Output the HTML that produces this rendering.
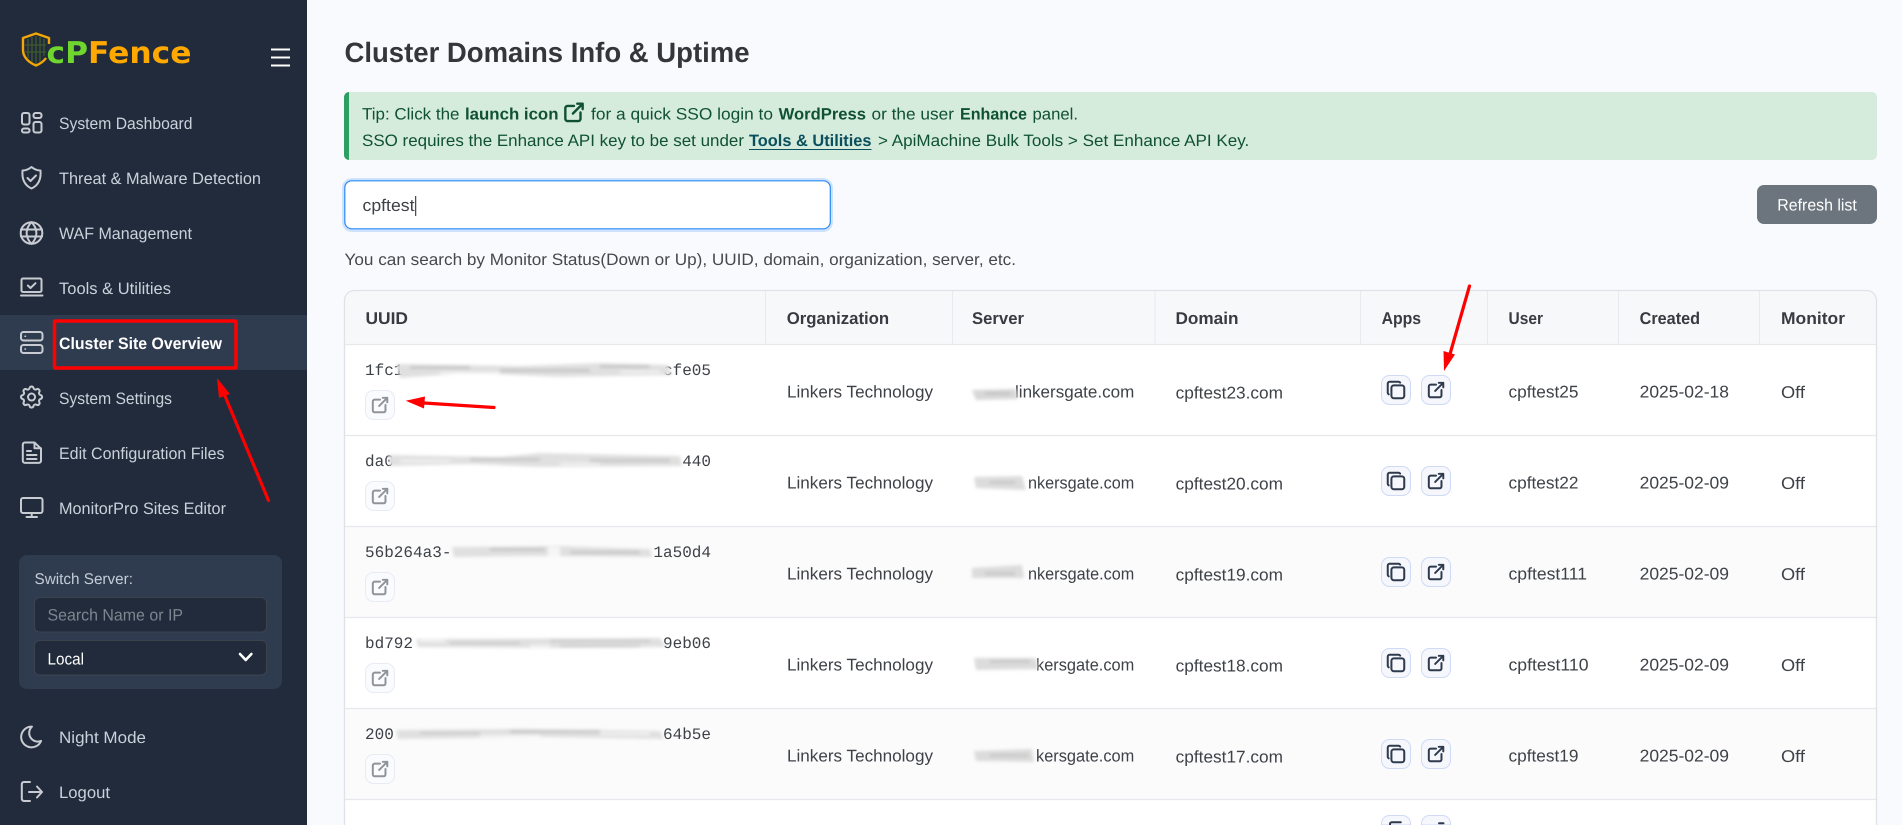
<!DOCTYPE html>
<html lang="en">
<head>
<meta charset="utf-8">
<title>Cluster Domains Info &amp; Uptime</title>
<style>
html,body{margin:0;padding:0;width:1902px;height:825px;overflow:hidden;background:#f9fafd}
svg{display:block;text-rendering:geometricPrecision}
text{font-family:"Liberation Sans",sans-serif;font-size:16px}
.nav{fill:#c9d1db;font-size:16.5px}
.h{font-weight:700;fill:#383b41;font-size:17px}
.t{fill:#3e4247;font-size:17px}
.m{font-family:"Liberation Mono",monospace;fill:#3e4247;font-size:16px}
.a{fill:#0f5132;font-size:16.5px}
.ab{fill:#0f5132;font-size:16.5px;font-weight:700}
.i{fill:none;stroke:#c8ccd2;stroke-width:2;stroke-linecap:round;stroke-linejoin:round}
.sep{stroke:#e8eaee;stroke-width:1}
</style>
</head>
<body>
<svg xmlns="http://www.w3.org/2000/svg" width="1902" height="825" viewBox="0 0 1902 825">
<defs>
  <filter id="bl" x="-10%" y="-80%" width="120%" height="260%"><feGaussianBlur stdDeviation="1.7"/></filter>
  <symbol id="ext" viewBox="0 0 24 24"><path fill="none" stroke="currentColor" stroke-width="2.2" stroke-linecap="round" stroke-linejoin="round" d="M12 6h-6a2 2 0 0 0 -2 2v10a2 2 0 0 0 2 2h10a2 2 0 0 0 2 -2v-6M11 13l9 -9M15 4h5v5"/></symbol>
  <symbol id="copy" viewBox="0 0 24 24"><path fill="none" stroke="currentColor" stroke-width="2.2" stroke-linecap="round" stroke-linejoin="round" d="M7 9.667a2.667 2.667 0 0 1 2.667 -2.667h8.666a2.667 2.667 0 0 1 2.667 2.667v8.666a2.667 2.667 0 0 1 -2.667 2.667h-8.666a2.667 2.667 0 0 1 -2.667 -2.667zM4.012 16.737a2.005 2.005 0 0 1 -1.012 -1.737v-10c0 -1.1 .9 -2 2 -2h10c.75 0 1.158 .385 1.5 1"/></symbol>
  <g id="btns">
    <rect x="1381.5" y="375.5" width="29" height="29" rx="8" fill="#f5f7fd" stroke="#cfdaf7"/>
    <rect x="1421.5" y="375.5" width="29" height="29" rx="8" fill="#f5f7fd" stroke="#cfdaf7"/>
    <use href="#copy" x="1385" y="379" width="22" height="22" color="#2f3a4d"/>
    <use href="#ext" x="1425.2" y="379.2" width="21.7" height="21.7" color="#2f3a4d"/>
  </g>
  <g id="lb">
    <rect x="365.5" y="390.5" width="29" height="29" rx="8" fill="#fafbfe" stroke="#e8ebf4"/>
    <use href="#ext" x="369.2" y="394.2" width="21.7" height="21.7" color="#8f949b"/>
  </g>
</defs>

<!-- main background -->
<rect width="1902" height="825" fill="#f9fafd"/>

<!-- sidebar -->
<rect width="307" height="825" fill="#212b3b"/>
<rect y="315" width="307" height="55" fill="#2f3c4f"/>

<!-- logo -->
<g stroke="#3f5a2e" stroke-width="1.3">
  <path d="M28 39V58M32 37V62M36 36V64M40 37V62M44 39V56M25 45H46M25 52H46"/>
</g>
<path d="M49 44V38L36 33.500 23 38V50C23 58 30 63 36 65.500 41 63.500 44 61 46 58" fill="none" stroke="#f2a608" stroke-width="2.4" stroke-linejoin="round"/>
<text x="46.500" y="63" style="font-family:'DejaVu Sans',sans-serif;font-size:30px;font-weight:700" textLength="145" lengthAdjust="spacingAndGlyphs"><tspan fill="#6ed62c">cP</tspan><tspan fill="#ffa900">Fence</tspan></text>

<!-- hamburger -->
<path d="M271 49.500H290M271 57.500H290M271 65.500H290" stroke="#fff" stroke-width="2"/>

<!-- nav icons -->
<g class="i">
  <rect x="22" y="113" width="7.500" height="11.500" rx="2"/><rect x="33.500" y="113" width="8" height="5" rx="2"/><rect x="22" y="128.500" width="7.500" height="4" rx="1.800"/><rect x="33.500" y="122" width="8" height="10.500" rx="2"/>
  <path d="M31.500 167c3 2.500 6 3.500 9 3.500 .8 9-2.500 15-9 18-6.500-3-9.800-9-9-18 3 0 6-1 9-3.500z M27.500 178l3 3 5.500-5.500"/>
  <circle cx="31.500" cy="233" r="10.800"/><path d="M21 229.500H42M21 236.500H42M31.500 222.200c-6.500 6.500-6.500 15 0 21.600M31.500 222.200c6.500 6.500 6.500 15 0 21.600"/>
  <rect x="21.500" y="278.500" width="20" height="13.500" rx="1.500"/><path d="M21 295.500H42.500M27.800 285.500l2.700 2.500 5-4.800"/>
  <rect x="21" y="332" width="21.500" height="8.500" rx="2.500"/><rect x="21" y="345" width="21.500" height="8" rx="2.500"/><path d="M25 336.300h.5M25 349h.5" stroke-width="1.500"/>
  <g transform="translate(17.500 383) scale(1.170)" stroke-width="1.700"><path d="M10.325 4.317c.426 -1.756 2.924 -1.756 3.350 0a1.724 1.724 0 0 0 2.573 1.066c1.543 -.94 3.310 .826 2.370 2.370a1.724 1.724 0 0 0 1.065 2.572c1.756 .426 1.756 2.924 0 3.350a1.724 1.724 0 0 0 -1.066 2.573c.94 1.543 -.826 3.310 -2.370 2.370a1.724 1.724 0 0 0 -2.572 1.065c-.426 1.756 -2.924 1.756 -3.350 0a1.724 1.724 0 0 0 -2.573 -1.066c-1.543 .94 -3.310 -.826 -2.370 -2.370a1.724 1.724 0 0 0 -1.065 -2.572c-1.756 -.426 -1.756 -2.924 0 -3.350a1.724 1.724 0 0 0 1.066 -2.573c-.94 -1.543 .826 -3.310 2.370 -2.370c1 .608 2.296 .07 2.572 -1.065z"/><circle cx="12" cy="12" r="3"/></g>
  <path d="M34.500 442.500H25c-1.300 0-2.200 .9-2.200 2.200v16c0 1.300 .9 2.200 2.200 2.200h13.800c1.300 0 2.200-.9 2.200-2.200v-12zM34.500 442.500v5.700h6.500M27 451h4M27 455h9.500M27 459h9.500"/>
  <rect x="21" y="498" width="21.500" height="15" rx="2"/><path d="M31.700 513v3.800M26.500 517H37"/>
  <g transform="translate(17.700 723.200) scale(1.150)" stroke-width="1.750"><path d="M12 3c.132 0 .263 0 .393 0a7.500 7.500 0 0 0 7.920 12.446a9 9 0 1 1 -8.313 -12.454z"/></g>
  <path d="M30 782H24c-1.300 0-2.200 .9-2.200 2.200v14.600c0 1.300 .9 2.200 2.200 2.200h6M29 792h13M37 786.500l5 5.500-5 5.500"/>
</g>

<!-- nav labels -->
<text class="nav" x="59" y="129" textLength="133.500" lengthAdjust="spacingAndGlyphs">System Dashboard</text>
<text class="nav" x="59" y="184" textLength="202" lengthAdjust="spacingAndGlyphs">Threat &amp; Malware Detection</text>
<text class="nav" x="59" y="239" textLength="133" lengthAdjust="spacingAndGlyphs">WAF Management</text>
<text class="nav" x="59" y="294" textLength="112" lengthAdjust="spacingAndGlyphs">Tools &amp; Utilities</text>
<text class="nav" x="59" y="349" style="font-weight:700;fill:#fff" textLength="163" lengthAdjust="spacingAndGlyphs">Cluster Site Overview</text>
<text class="nav" x="59" y="404" textLength="113" lengthAdjust="spacingAndGlyphs">System Settings</text>
<text class="nav" x="59" y="459" textLength="165.500" lengthAdjust="spacingAndGlyphs">Edit Configuration Files</text>
<text class="nav" x="59" y="514" textLength="167" lengthAdjust="spacingAndGlyphs">MonitorPro Sites Editor</text>
<text class="nav" x="59" y="743" textLength="87" lengthAdjust="spacingAndGlyphs">Night Mode</text>
<text class="nav" x="59" y="798" textLength="51" lengthAdjust="spacingAndGlyphs">Logout</text>

<!-- switch server -->
<rect x="19" y="555" width="263" height="134" rx="8" fill="#2f3c4f"/>
<text x="34.500" y="584" style="font-size:15.500px;fill:#c5ccd6" textLength="98.500" lengthAdjust="spacingAndGlyphs">Switch Server:</text>
<rect x="34.500" y="597.500" width="232" height="34.500" rx="5" fill="#212b3b" stroke="#3d434c"/>
<text x="47.500" y="620.500" style="font-size:16.500px;fill:#7d8590" textLength="135.500" lengthAdjust="spacingAndGlyphs">Search Name or IP</text>
<rect x="34.500" y="640.500" width="232" height="34.500" rx="5" fill="#212b3b" stroke="#3d434c"/>
<text x="47.500" y="664.500" style="font-size:16.500px;fill:#fff" textLength="36.500" lengthAdjust="spacingAndGlyphs">Local</text>
<path d="M240 654l5.700 6 5.700-6" fill="none" stroke="#fff" stroke-width="2.600" stroke-linecap="round" stroke-linejoin="round"/>

<!-- title -->
<text x="344.500" y="62" style="font-size:28px;font-weight:700;fill:#33363b" textLength="405" lengthAdjust="spacingAndGlyphs">Cluster Domains Info &amp; Uptime</text>

<!-- alert -->
<rect x="344" y="92" width="1533" height="68" rx="5" fill="#d5ebdc"/>
<path d="M349 92a5 5 0 0 0-5 5v58a5 5 0 0 0 5 5z" fill="#2f9e63"/>
<text class="a" x="362" y="119.500" textLength="97.500" lengthAdjust="spacingAndGlyphs">Tip: Click the</text>
<text class="ab" x="465" y="119.500" textLength="93.500" lengthAdjust="spacingAndGlyphs">launch icon</text>
<use href="#ext" x="561" y="99.400" width="26" height="26" color="#0f5132"/>
<text class="a" x="591" y="119.500" textLength="182" lengthAdjust="spacingAndGlyphs">for a quick SSO login to</text>
<text class="ab" x="778.700" y="119.500" textLength="87.300" lengthAdjust="spacingAndGlyphs">WordPress</text>
<text class="a" x="871.500" y="119.500" textLength="82.500" lengthAdjust="spacingAndGlyphs">or the user</text>
<text class="ab" x="960" y="119.500" textLength="67" lengthAdjust="spacingAndGlyphs">Enhance</text>
<text class="a" x="1032.500" y="119.500" textLength="45.500" lengthAdjust="spacingAndGlyphs">panel.</text>
<text class="a" x="362" y="146" textLength="382" lengthAdjust="spacingAndGlyphs">SSO requires the Enhance API key to be set under</text>
<text class="ab" x="749" y="146" style="fill:#0a4f5c" textLength="122.500" lengthAdjust="spacingAndGlyphs">Tools &amp; Utilities</text>
<path d="M749 149.500H871.500" stroke="#0a4f5c" stroke-width="1"/>
<text class="a" x="878" y="146" textLength="371.300" lengthAdjust="spacingAndGlyphs">&gt; ApiMachine Bulk Tools &gt; Set Enhance API Key.</text>

<!-- search -->
<rect x="342" y="178" width="491" height="54" rx="10" fill="#cfe2fd"/>
<rect x="344.800" y="180.800" width="485.500" height="48" rx="7" fill="#fff" stroke="#2a8bf7" stroke-width="1.200"/>
<text x="362.500" y="211" style="font-size:17px;fill:#3e4247" textLength="52" lengthAdjust="spacingAndGlyphs">cpftest</text>
<path d="M415.700 196V216" stroke="#222" stroke-width="1"/>

<!-- refresh -->
<rect x="1757" y="185" width="120" height="39" rx="7" fill="#6c757d"/>
<text x="1777.300" y="210.500" style="font-size:16.500px;fill:#fff" textLength="79.500" lengthAdjust="spacingAndGlyphs">Refresh list</text>

<!-- help -->
<text x="344.500" y="265" style="font-size:16.500px;fill:#45494e" textLength="671.500" lengthAdjust="spacingAndGlyphs">You can search by Monitor Status(Down or Up), UUID, domain, organization, server, etc.</text>

<!-- table -->
<path d="M344.500 825V300.500a10 10 0 0 1 10-10H1866.500a10 10 0 0 1 10 10V825z" fill="#fff"/>
<path d="M345.200 344V300.500a9.500 9.500 0 0 1 9.500-9.500H1866.500a9.500 9.500 0 0 1 9.500 9.500V344z" fill="#f7f8fa"/>
<rect x="345.200" y="527" width="1530.800" height="90" fill="#fbfbfc"/>
<rect x="345.200" y="709" width="1530.800" height="90" fill="#fbfbfc"/>
<path d="M344.500 825V300.500a10 10 0 0 1 10-10H1866.500a10 10 0 0 1 10 10V825" fill="none" stroke="#dfe2e7" stroke-width="1.300"/>
<g class="sep">
  <path d="M765.500 291V344M952.500 291V344M1155 291V344M1360.500 291V344M1487.500 291V344M1618.500 291V344M1759.500 291V344"/>
  <path d="M345 344.500H1876M345 435.500H1876M345 526.500H1876M345 617.500H1876M345 708.500H1876M345 799.500H1876" stroke="#e6e8ec" stroke-width="1.200"/>
</g>
<text class="h" x="365.500" y="324" textLength="42.500" lengthAdjust="spacingAndGlyphs">UUID</text>
<text class="h" x="786.700" y="324" textLength="102.500" lengthAdjust="spacingAndGlyphs">Organization</text>
<text class="h" x="972" y="324" textLength="52" lengthAdjust="spacingAndGlyphs">Server</text>
<text class="h" x="1175.500" y="324" textLength="63" lengthAdjust="spacingAndGlyphs">Domain</text>
<text class="h" x="1381.600" y="324" textLength="39.500" lengthAdjust="spacingAndGlyphs">Apps</text>
<text class="h" x="1508.500" y="324" textLength="34.500" lengthAdjust="spacingAndGlyphs">User</text>
<text class="h" x="1639.600" y="324" textLength="60.500" lengthAdjust="spacingAndGlyphs">Created</text>
<text class="h" x="1781" y="324" textLength="64" lengthAdjust="spacingAndGlyphs">Monitor</text>

<!-- row 1 -->
<text class="m" x="365" y="375">1fc1</text><text class="m" x="711" y="375" text-anchor="end">cfe05</text>
<g filter="url(#bl)"><path fill="#e0e0e0" d="M396 364L520 366 600 363 668 365 672 375 560 377 470 373 400 378z"/><path fill="#c6c6c6" d="M410 366H470V369H410zM500 369H590V372H500zM600 365H650V368H600z"/><path fill="#f4f4f4" d="M440 372H500V374H440zM620 371H660V373H620z"/></g>
<use href="#lb"/>
<text class="t" x="787" y="397.500" textLength="146" lengthAdjust="spacingAndGlyphs">Linkers Technology</text>
<text class="t" x="1015" y="397.500" textLength="119.300" lengthAdjust="spacingAndGlyphs">linkersgate.com</text>
<g filter="url(#bl)"><path fill="#d8d8d8" d="M972 390L1016 389 1018 399 976 400z"/><path fill="#c4c4c4" d="M985 392H1010V395H985z"/></g>
<text class="t" x="1175.700" y="398.500" textLength="107.300" lengthAdjust="spacingAndGlyphs">cpftest23.com</text>
<use href="#btns"/>
<text class="t" x="1508.500" y="397.500" textLength="70" lengthAdjust="spacingAndGlyphs">cpftest25</text>
<text class="t" x="1639.600" y="397.500" textLength="89.400" lengthAdjust="spacingAndGlyphs">2025-02-18</text>
<text class="t" x="1781" y="398" textLength="24" lengthAdjust="spacingAndGlyphs">Off</text>

<!-- row 2 -->
<text class="m" x="365" y="466">da0</text><text class="m" x="711" y="466" text-anchor="end">440</text>
<g filter="url(#bl)"><path fill="#e0e0e0" d="M388 455L500 457 540 453 680 456 682 466 540 467 470 464 390 466z"/><path fill="#c8c8c8" d="M470 458H540V461H470zM590 459H670V462H590z"/><path fill="#f4f4f4" d="M400 460H450V462H400zM560 463H600V465H560z"/></g>
<use href="#lb" y="91"/>
<text class="t" x="787" y="488.500" textLength="146" lengthAdjust="spacingAndGlyphs">Linkers Technology</text>
<text class="t" x="1028" y="488.500" textLength="106.300" lengthAdjust="spacingAndGlyphs">nkersgate.com</text>
<g filter="url(#bl)"><path fill="#dcdcdc" d="M974 477L1022 476 1026 490 976 488z"/><path fill="#c8c8c8" d="M990 481H1015V484H990z"/></g>
<text class="t" x="1175.700" y="489.500" textLength="107.300" lengthAdjust="spacingAndGlyphs">cpftest20.com</text>
<use href="#btns" y="91"/>
<text class="t" x="1508.500" y="488.500" textLength="70" lengthAdjust="spacingAndGlyphs">cpftest22</text>
<text class="t" x="1639.600" y="488.500" textLength="89.400" lengthAdjust="spacingAndGlyphs">2025-02-09</text>
<text class="t" x="1781" y="489" textLength="24" lengthAdjust="spacingAndGlyphs">Off</text>

<!-- row 3 -->
<text class="m" x="365" y="557">56b264a3-</text><text class="m" x="711" y="557" text-anchor="end">1a50d4</text>
<g filter="url(#bl)"><path fill="#e0e0e0" d="M452 547L560 546 650 549 652 557 540 556 454 557z"/><path fill="#c8c8c8" d="M490 548H545V551H490zM570 551H640V554H570z"/><path fill="#f6f6f6" d="M548 547H560V556H548z"/></g>
<use href="#lb" y="182"/>
<text class="t" x="787" y="579.500" textLength="146" lengthAdjust="spacingAndGlyphs">Linkers Technology</text>
<text class="t" x="1028" y="579.500" textLength="106.300" lengthAdjust="spacingAndGlyphs">nkersgate.com</text>
<g filter="url(#bl)"><path fill="#dcdcdc" d="M972 568L1022 565 1024 578 972 578z"/><path fill="#c8c8c8" d="M985 572H1015V575H985z"/></g>
<text class="t" x="1175.700" y="580.500" textLength="107.300" lengthAdjust="spacingAndGlyphs">cpftest19.com</text>
<use href="#btns" y="182"/>
<text class="t" x="1508.500" y="579.500" textLength="78.500" lengthAdjust="spacingAndGlyphs">cpftest111</text>
<text class="t" x="1639.600" y="579.500" textLength="89.400" lengthAdjust="spacingAndGlyphs">2025-02-09</text>
<text class="t" x="1781" y="580" textLength="24" lengthAdjust="spacingAndGlyphs">Off</text>

<!-- row 4 -->
<text class="m" x="365" y="648">bd792</text><text class="m" x="711" y="648" text-anchor="end">9eb06</text>
<g filter="url(#bl)"><path fill="#e0e0e0" d="M416 639L660 638 666 647 540 648 418 647z"/><path fill="#c6c6c6" d="M450 642H520V644H450zM550 640H650V642H550zM560 645H640V647H560z"/><path fill="#f8f8f8" d="M420 640H445V642H420zM530 645H550V647H530z"/></g>
<use href="#lb" y="273"/>
<text class="t" x="787" y="670.500" textLength="146" lengthAdjust="spacingAndGlyphs">Linkers Technology</text>
<text class="t" x="1036" y="670.500" textLength="98.300" lengthAdjust="spacingAndGlyphs">kersgate.com</text>
<g filter="url(#bl)"><path fill="#dcdcdc" d="M974 658L1036 658 1038 669 976 670z"/><path fill="#c8c8c8" d="M990 660H1030V663H990z"/></g>
<text class="t" x="1175.700" y="671.500" textLength="107.300" lengthAdjust="spacingAndGlyphs">cpftest18.com</text>
<use href="#btns" y="273"/>
<text class="t" x="1508.500" y="670.500" textLength="80" lengthAdjust="spacingAndGlyphs">cpftest110</text>
<text class="t" x="1639.600" y="670.500" textLength="89.400" lengthAdjust="spacingAndGlyphs">2025-02-09</text>
<text class="t" x="1781" y="671" textLength="24" lengthAdjust="spacingAndGlyphs">Off</text>

<!-- row 5 -->
<text class="m" x="365" y="739">200</text><text class="m" x="711" y="739" text-anchor="end">64b5e</text>
<g filter="url(#bl)"><path fill="#e0e0e0" d="M396 730L520 729 660 731 664 739 540 737 398 739z"/><path fill="#c8c8c8" d="M420 732H480V734H420zM510 730H600V733H510z"/><path fill="#f6f6f6" d="M480 735H540V737H480zM600 733H650V735H600z"/></g>
<use href="#lb" y="364"/>
<text class="t" x="787" y="761.500" textLength="146" lengthAdjust="spacingAndGlyphs">Linkers Technology</text>
<text class="t" x="1036" y="761.500" textLength="98.300" lengthAdjust="spacingAndGlyphs">kersgate.com</text>
<g filter="url(#bl)"><path fill="#dcdcdc" d="M974 751L1032 749 1034 762 976 761z"/><path fill="#c8c8c8" d="M990 754H1028V757H990z"/></g>
<text class="t" x="1175.700" y="762.500" textLength="107.300" lengthAdjust="spacingAndGlyphs">cpftest17.com</text>
<use href="#btns" y="364"/>
<text class="t" x="1508.500" y="761.500" textLength="70" lengthAdjust="spacingAndGlyphs">cpftest19</text>
<text class="t" x="1639.600" y="761.500" textLength="89.400" lengthAdjust="spacingAndGlyphs">2025-02-09</text>
<text class="t" x="1781" y="762" textLength="24" lengthAdjust="spacingAndGlyphs">Off</text>

<!-- row 6 partial: only the tops of the buttons are visible -->
<path d="M1381.500 825V823.500a8 8 0 0 1 8-8h13a8 8 0 0 1 8 8V825z" fill="#f5f7fd" stroke="#cfdaf7"/>
<path d="M1421.500 825V823.500a8 8 0 0 1 8-8h13a8 8 0 0 1 8 8V825z" fill="#f5f7fd" stroke="#cfdaf7"/>
<path d="M1390 824.500V824c0-1 .8-1.800 1.800-1.800h9" fill="none" stroke="#2f3a4d" stroke-width="2" stroke-linecap="round"/>
<path d="M1439 823.200h4.500" fill="none" stroke="#2f3a4d" stroke-width="2" stroke-linecap="round"/>

<!-- red annotations -->
<rect x="54.500" y="321" width="181.500" height="47" rx="1" fill="none" stroke="#ff0000" stroke-width="3.500"/>
<path d="M268.500 500.500L225 396" stroke="#ff0000" stroke-width="3.200" stroke-linecap="round"/>
<path d="M217 378L230 394 219 398z" fill="#ff0000"/>
<path d="M494 407.500L424 403" stroke="#ff0000" stroke-width="3.200" stroke-linecap="round"/>
<path d="M405.700 400.700L425 396.500 424 408.500z" fill="#ff0000"/>
<path d="M1469.500 286L1450 354" stroke="#ff0000" stroke-width="3.200" stroke-linecap="round"/>
<path d="M1444 371L1443.500 351 1455 354.500z" fill="#ff0000"/>
</svg>
</body>
</html>
